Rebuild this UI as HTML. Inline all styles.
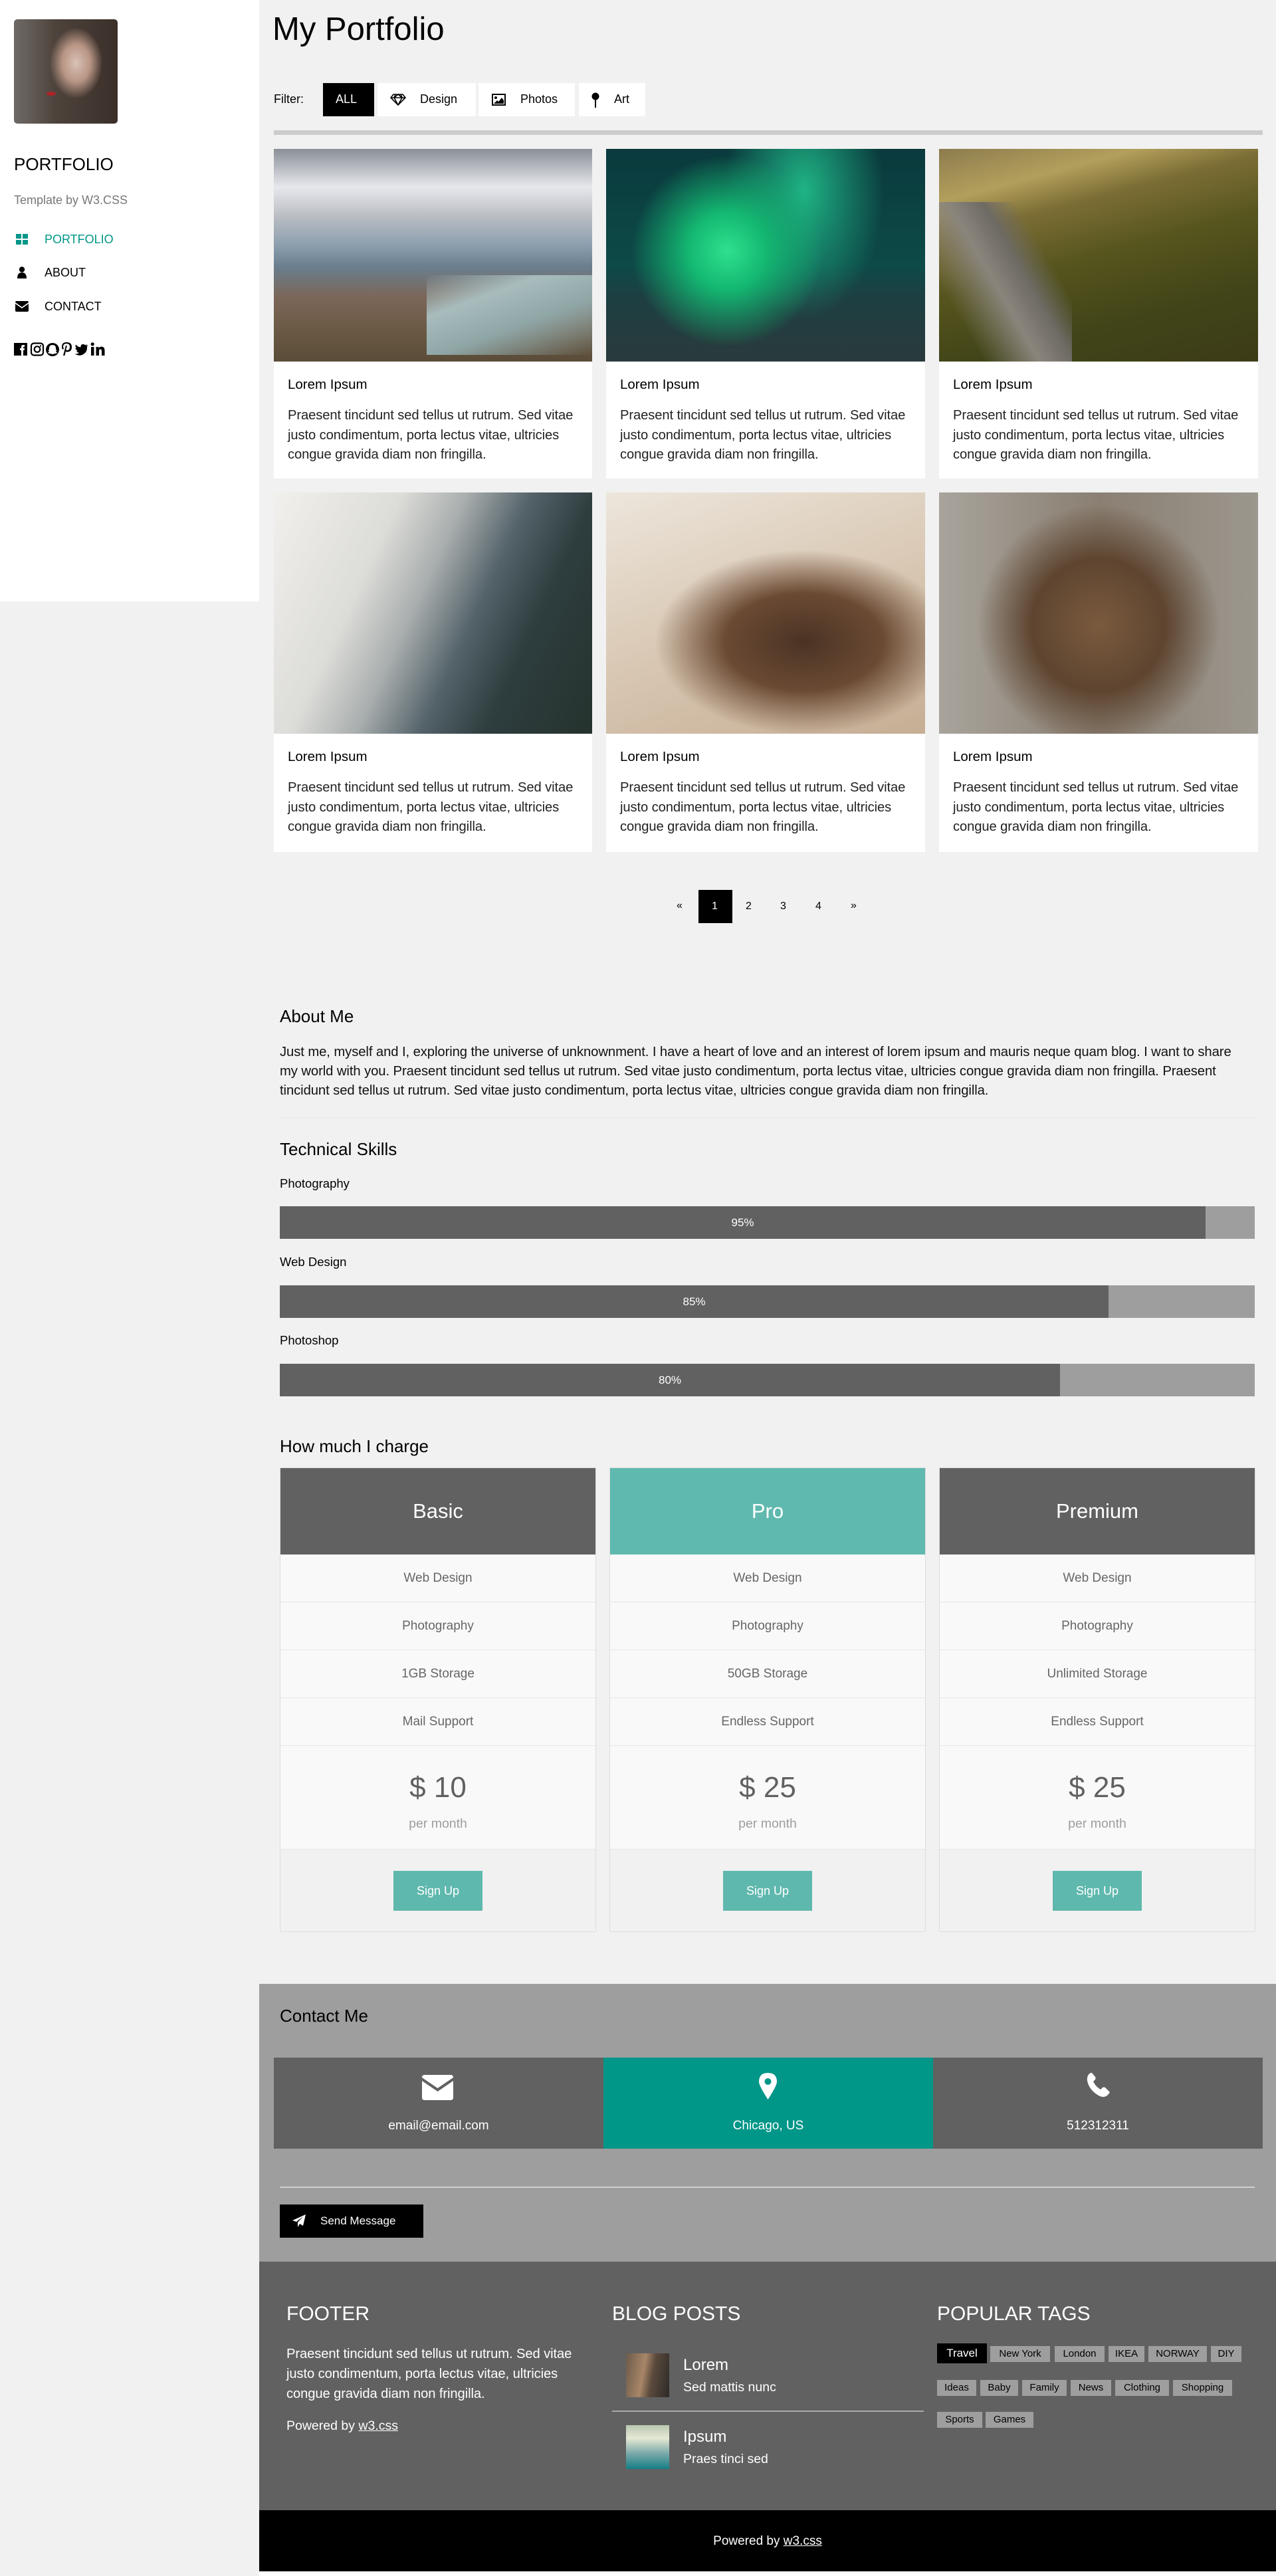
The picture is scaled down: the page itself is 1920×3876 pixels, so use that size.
<!DOCTYPE html>
<html><head><meta charset="utf-8">
<style>
*{margin:0;padding:0;box-sizing:border-box}
html,body{width:1920px;height:3876px;background:#f1f1f1;font-family:"Liberation Sans",sans-serif;color:#000;overflow:hidden}
.a{position:absolute;white-space:nowrap}
.img{position:absolute}
.card{position:absolute;background:#fff;width:480px}
.card .t{position:absolute;left:21px;font-size:20.5px}
.card .p{position:absolute;left:21px;font-size:20.2px;line-height:29.5px;color:#222;letter-spacing:-0.1px}
.bar{position:absolute;left:421px;width:1467px;height:49px;background:#9e9e9e}
.bar div{height:49px;background:#616161;color:#fff;font-size:17px;line-height:49px;text-align:center}
.pc{position:absolute;top:2208px;width:476px;height:698px;border:1px solid #ddd;background:#f9f9f9}
.pc .h{height:130px;color:#fff;font-size:31px;text-align:center;line-height:130px}
.pc .r{height:72px;border-bottom:1px solid #e6e6e6;text-align:center;line-height:72px;font-size:19px;color:#666}
.pc .pr{height:156px;border-bottom:1px solid #e6e6e6;text-align:center}
.pc .b{height:124px;background:#f1f1f1;position:relative;border-bottom:1px solid #ddd}
.pc .b span{position:absolute;left:50%;margin-left:-67px;top:32px;width:134px;height:60px;background:#5fb8ad;color:#fff;font-size:18px;line-height:60px;text-align:center}
.tag{position:absolute;height:24px;background:#9e9e9e;color:#000;font-size:15px;line-height:24px;text-align:center}
</style></head><body>

<!-- sidebar -->
<div class="img" style="left:0;top:0;width:390px;height:905px;background:#fff"></div>
<div class="img" style="left:21px;top:29px;width:156px;height:157px;border-radius:5px;background:radial-gradient(ellipse 30% 40% at 60% 42%,#d9c2b5 0%,#b89584 45%,rgba(90,70,60,0) 85%),linear-gradient(90deg,#6f6a66,#4e433c 40%,#3b2f29 100%)"></div>
<div class="img" style="left:70px;top:138px;width:14px;height:6px;border-radius:50%;background:#b0232a"></div>
<div class="a" style="left:21px;top:232px;font-size:26px">PORTFOLIO</div>
<div class="a" style="left:21px;top:291px;font-size:18px;color:#777">Template by W3.CSS</div>
<svg class="img" style="left:24px;top:352px" width="19" height="16" viewBox="0 0 19 16"><g fill="#009688"><rect x="0" y="0" width="8" height="7"/><rect x="10" y="0" width="8" height="7"/><rect x="0" y="9" width="8" height="7"/><rect x="10" y="9" width="8" height="7"/></g></svg>
<div class="a" style="left:67px;top:350px;font-size:18px;color:#009688">PORTFOLIO</div>
<svg class="img" style="left:26px;top:401px" width="14" height="18" viewBox="0 0 14 18"><circle cx="7" cy="4.5" r="4.2" fill="#000"/><path d="M0 18 Q0 9 7 9 Q14 9 14 18Z" fill="#000"/></svg>
<div class="a" style="left:67px;top:400px;font-size:18px">ABOUT</div>
<svg class="img" style="left:23px;top:453px" width="20" height="16" viewBox="0 0 20 16"><path d="M0 2 Q0 0 2 0 H18 Q20 0 20 2 L10 9 Z" fill="#000"/><path d="M0 4 L10 11 L20 4 V14 Q20 16 18 16 H2 Q0 16 0 14Z" fill="#000"/></svg>
<div class="a" style="left:67px;top:451px;font-size:18px">CONTACT</div>
<svg class="img" style="left:21px;top:514px" width="150" height="22" viewBox="0 0 150 22">
<rect x="0" y="2" width="20" height="19" fill="#000"/><path d="M11 21V13H9V10H11V8Q11 5 14 5H16V8H14.5Q14 8 14 9V10H16L15.6 13H14V21Z" fill="#fff"/>
<rect x="26" y="2.5" width="18" height="18" rx="4" fill="none" stroke="#000" stroke-width="2.2"/><circle cx="35" cy="11.5" r="4.3" fill="none" stroke="#000" stroke-width="2.2"/><circle cx="40" cy="6.5" r="1.2" fill="#000"/>
<circle cx="58" cy="12" r="10" fill="#000"/><path d="M58 5Q53 5 53 10V12L51 13L53 14Q52 17 50 17Q54 18 58 19Q62 18 66 17Q64 17 63 14L65 13L63 12V10Q63 5 58 5Z" fill="#fff"/>
<path d="M79 1Q72 1 72 8Q72 11 74 12L75 10Q74 9 74 8Q74 3 79 3Q84 3 84 8Q84 13 80 13Q78 13 78.5 11L80 6H78L74 21H76.5L77.8 15Q79 15.5 80 15.5Q87 15.5 87 8Q87 1 79 1Z" fill="#000"/>
<path d="M111 5Q110 6 108 6.5Q109.5 5.5 110 4Q108.5 5 107 5.2Q105.5 3.5 103 4Q100 5 100.5 8.5Q96 8 93 4.5Q91.5 8 94.5 10Q93.5 10 92.5 9.5Q92.5 12.5 96 13.5Q95 14 94 13.8Q95 16.5 98 16.8Q95.5 19 91.5 18.5Q101 24 108 16Q110.5 12 110 7.5Q111 6.5 111 5Z" fill="#000"/>
<rect x="116" y="8" width="4.5" height="13" fill="#000"/><circle cx="118.2" cy="3.8" r="2.6" fill="#000"/><path d="M123.5 8H127.5V10Q129 7.5 132 7.6Q136.5 7.8 136.5 13V21H132V14Q132 11.5 130 11.5Q128 11.5 128 14V21H123.5Z" fill="#000"/>
</svg>

<!-- header -->
<div class="a" style="left:410px;top:16px;font-size:49px">My Portfolio</div>
<div class="a" style="left:412px;top:139px;font-size:18px">Filter:</div>
<div class="img" style="left:486px;top:125px;width:77px;height:50px;background:#000"></div>
<div class="a" style="left:505px;top:139px;font-size:18px;color:#fff">ALL</div>
<div class="img" style="left:568px;top:125px;width:148px;height:50px;background:#fff"></div>
<svg class="img" style="left:587px;top:141px" width="24" height="18" viewBox="0 0 24 18"><path d="M5 1H19L23 6L12 17L1 6Z M1 6H23 M8 1L6 6L12 17L18 6L16 1 M6 6L12 1L18 6" fill="none" stroke="#000" stroke-width="1.6"/></svg>
<div class="a" style="left:632px;top:139px;font-size:18px">Design</div>
<div class="img" style="left:720px;top:125px;width:145px;height:50px;background:#fff"></div>
<svg class="img" style="left:740px;top:141px" width="21" height="18" viewBox="0 0 21 18"><rect x="1" y="1" width="19" height="16" fill="none" stroke="#000" stroke-width="2"/><circle cx="6" cy="6" r="2" fill="#000"/><path d="M3 15L8 10L10 12L15 6L18 10V15Z" fill="#000"/></svg>
<div class="a" style="left:783px;top:139px;font-size:18px">Photos</div>
<div class="img" style="left:871px;top:125px;width:100px;height:50px;background:#fff"></div>
<svg class="img" style="left:890px;top:139px" width="12" height="23" viewBox="0 0 12 23"><circle cx="6" cy="6" r="5.5" fill="#000"/><rect x="5" y="10" width="2" height="13" fill="#000"/></svg>
<div class="a" style="left:924px;top:139px;font-size:18px">Art</div>
<div class="img" style="left:412px;top:196px;width:1488px;height:7px;background:#ccc"></div>

<!-- cards row 1 -->
<div class="card" style="left:412px;top:224px;width:479px;height:496px">
 <div class="img" style="left:0;top:0;width:479px;height:320px;background:linear-gradient(180deg,#8a8f98 0%,#e6e8ec 18%,#b9bcc2 32%,#8ea0b0 45%,#6a7f8f 55%,#7b6658 70%,#6b5a45 85%,#5a4c38 100%)"></div>
 <div class="img" style="left:230px;top:190px;width:249px;height:120px;background:linear-gradient(160deg,rgba(168,190,192,0) 0%,#a8bcbd 30%,#8fa6a6 60%,rgba(100,80,60,0) 100%)"></div>
 <div class="t" style="top:343px">Lorem Ipsum</div>
 <div class="p" style="top:387px">Praesent tincidunt sed tellus ut rutrum. Sed vitae<br>justo condimentum, porta lectus vitae, ultricies<br>congue gravida diam non fringilla.</div>
</div>
<div class="card" style="left:912px;top:224px;width:480px;height:496px">
 <div class="img" style="left:0;top:0;width:480px;height:320px;background:radial-gradient(ellipse 30% 45% at 38% 48%,#2fe08e 0%,#14b872 40%,rgba(10,80,70,0) 100%),radial-gradient(ellipse 25% 60% at 62% 20%,#1fb485 0%,rgba(10,80,70,0) 100%),linear-gradient(180deg,#0a3a3d 0%,#0d4a48 55%,#1d3f42 70%,#2a3a3c 100%)"></div>
 <div class="t" style="top:343px">Lorem Ipsum</div>
 <div class="p" style="top:387px">Praesent tincidunt sed tellus ut rutrum. Sed vitae<br>justo condimentum, porta lectus vitae, ultricies<br>congue gravida diam non fringilla.</div>
</div>
<div class="card" style="left:1413px;top:224px;width:480px;height:496px">
 <div class="img" style="left:0;top:0;width:480px;height:320px;background:linear-gradient(165deg,#8c7c4e 0%,#b39f5c 18%,#7c6e35 30%,#56551e 50%,#414418 75%,#3c3c17 100%)"></div>
 <div class="img" style="left:0;top:80px;width:200px;height:240px;background:linear-gradient(60deg,rgba(0,0,0,0) 20%,#8a857c 45%,#6e6a64 60%,rgba(0,0,0,0) 75%)"></div>
 <div class="t" style="top:343px">Lorem Ipsum</div>
 <div class="p" style="top:387px">Praesent tincidunt sed tellus ut rutrum. Sed vitae<br>justo condimentum, porta lectus vitae, ultricies<br>congue gravida diam non fringilla.</div>
</div>
<!-- cards row 2 -->
<div class="card" style="left:412px;top:741px;width:479px;height:541px">
 <div class="img" style="left:0;top:0;width:479px;height:363px;background:linear-gradient(115deg,#f2f0ec 0%,#dcdcd8 30%,#a9aeae 45%,#54636a 60%,#2e3d3e 75%,#25332e 100%)"></div>
 <div class="t" style="top:386px">Lorem Ipsum</div>
 <div class="p" style="top:430px">Praesent tincidunt sed tellus ut rutrum. Sed vitae<br>justo condimentum, porta lectus vitae, ultricies<br>congue gravida diam non fringilla.</div>
</div>
<div class="card" style="left:912px;top:741px;width:480px;height:541px">
 <div class="img" style="left:0;top:0;width:480px;height:363px;background:radial-gradient(ellipse 55% 45% at 62% 62%,#4a3324 0%,#6b4a33 45%,rgba(200,180,160,0) 85%),linear-gradient(160deg,#ede6dc 0%,#d9c8b4 50%,#c6ae94 100%)"></div>
 <div class="t" style="top:386px">Lorem Ipsum</div>
 <div class="p" style="top:430px">Praesent tincidunt sed tellus ut rutrum. Sed vitae<br>justo condimentum, porta lectus vitae, ultricies<br>congue gravida diam non fringilla.</div>
</div>
<div class="card" style="left:1413px;top:741px;width:480px;height:541px">
 <div class="img" style="left:0;top:0;width:480px;height:363px;background:radial-gradient(ellipse 38% 50% at 50% 55%,#7a5a3e 0%,#5e4530 55%,rgba(120,110,100,0) 100%),linear-gradient(90deg,#a8a49c,#8a7f72 50%,#9c978e)"></div>
 <div class="t" style="top:386px">Lorem Ipsum</div>
 <div class="p" style="top:430px">Praesent tincidunt sed tellus ut rutrum. Sed vitae<br>justo condimentum, porta lectus vitae, ultricies<br>congue gravida diam non fringilla.</div>
</div>

<!-- pagination -->
<div class="a" style="left:1018px;top:1354px;font-size:16px">«</div>
<div class="img" style="left:1051px;top:1339px;width:51px;height:50px;background:#000"></div>
<div class="a" style="left:1071px;top:1355px;font-size:16px;color:#fff">1</div>
<div class="a" style="left:1122px;top:1355px;font-size:16px">2</div>
<div class="a" style="left:1174px;top:1355px;font-size:16px">3</div>
<div class="a" style="left:1227px;top:1355px;font-size:16px">4</div>
<div class="a" style="left:1280px;top:1354px;font-size:16px">»</div>

<!-- about -->
<div class="a" style="left:421px;top:1514px;font-size:26px">About Me</div>
<div class="a" style="left:421px;top:1569px;font-size:20.3px;line-height:29px;color:#111;letter-spacing:-0.1px">Just me, myself and I, exploring the universe of unknownment. I have a heart of love and an interest of lorem ipsum and mauris neque quam blog. I want to share<br>my world with you. Praesent tincidunt sed tellus ut rutrum. Sed vitae justo condimentum, porta lectus vitae, ultricies congue gravida diam non fringilla. Praesent<br>tincidunt sed tellus ut rutrum. Sed vitae justo condimentum, porta lectus vitae, ultricies congue gravida diam non fringilla.</div>
<div class="img" style="left:421px;top:1681px;width:1467px;height:1px;background:#e8e8e8"></div>
<div class="a" style="left:421px;top:1714px;font-size:26px">Technical Skills</div>
<div class="a" style="left:421px;top:1770px;font-size:18.5px">Photography</div>
<div class="bar" style="top:1815px"><div style="width:1393px">95%</div></div>
<div class="a" style="left:421px;top:1888px;font-size:18.5px">Web Design</div>
<div class="bar" style="top:1934px"><div style="width:1247px">85%</div></div>
<div class="a" style="left:421px;top:2006px;font-size:18.5px">Photoshop</div>
<div class="bar" style="top:2052px"><div style="width:1174px">80%</div></div>

<!-- pricing -->
<div class="a" style="left:421px;top:2161px;font-size:26px">How much I charge</div>
<div class="pc" style="left:421px"><div class="h" style="background:#616161">Basic</div><div class="r">Web Design</div><div class="r">Photography</div><div class="r">1GB Storage</div><div class="r">Mail Support</div><div class="pr"><div style="padding-top:38px;font-size:44px;color:#616161">$ 10</div><div style="margin-top:18px;font-size:19.5px;color:#9e9e9e">per month</div></div><div class="b"><span>Sign Up</span></div></div>
<div class="pc" style="left:917px"><div class="h" style="background:#60b9af">Pro</div><div class="r">Web Design</div><div class="r">Photography</div><div class="r">50GB Storage</div><div class="r">Endless Support</div><div class="pr"><div style="padding-top:38px;font-size:44px;color:#616161">$ 25</div><div style="margin-top:18px;font-size:19.5px;color:#9e9e9e">per month</div></div><div class="b"><span>Sign Up</span></div></div>
<div class="pc" style="left:1413px"><div class="h" style="background:#616161">Premium</div><div class="r">Web Design</div><div class="r">Photography</div><div class="r">Unlimited Storage</div><div class="r">Endless Support</div><div class="pr"><div style="padding-top:38px;font-size:44px;color:#616161">$ 25</div><div style="margin-top:18px;font-size:19.5px;color:#9e9e9e">per month</div></div><div class="b"><span>Sign Up</span></div></div>

<!-- contact -->
<div class="img" style="left:390px;top:2985px;width:1530px;height:418px;background:#9e9e9e"></div>
<div class="a" style="left:421px;top:3018px;font-size:26px">Contact Me</div>
<div class="img" style="left:412px;top:3096px;width:496px;height:137px;background:#616161"></div>
<div class="img" style="left:908px;top:3096px;width:496px;height:137px;background:#009688"></div>
<div class="img" style="left:1404px;top:3096px;width:496px;height:137px;background:#616161"></div>
<svg class="img" style="left:635px;top:3122px" width="47" height="38" viewBox="0 0 47 38"><path d="M0 4Q0 0 4 0H43Q47 0 47 4L23.5 20Z" fill="#fff"/><path d="M0 9L23.5 25L47 9V34Q47 38 43 38H4Q0 38 0 34Z" fill="#fff"/></svg>
<svg class="img" style="left:1142px;top:3119px" width="27" height="40" viewBox="0 0 27 40"><path d="M13.5 0Q27 0 27 13.5Q27 19 13.5 40Q0 19 0 13.5Q0 0 13.5 0ZM13.5 8A5 5 0 1 0 13.5 18A5 5 0 1 0 13.5 8Z" fill="#fff" fill-rule="evenodd"/></svg>
<svg class="img" style="left:1633px;top:3119px" width="38" height="37" viewBox="0 0 38 37"><path d="M8 0Q2 3 3 12Q6 26 20 34Q29 39 35 32L37 29L30 22Q28 21 26 22L23 25Q16 21 12 13L15 10Q16 8 15 6L10 0Z" fill="#fff"/></svg>
<div class="a" style="left:412px;width:496px;text-align:center;top:3188px;font-size:19px;color:#fff">email@email.com</div>
<div class="a" style="left:908px;width:496px;text-align:center;top:3188px;font-size:19px;color:#fff">Chicago, US</div>
<div class="a" style="left:1404px;width:496px;text-align:center;top:3188px;font-size:19px;color:#fff">512312311</div>
<div class="img" style="left:421px;top:3290px;width:1467px;height:2px;background:#d0d0d0"></div>
<div class="img" style="left:421px;top:3317px;width:216px;height:50px;background:#000"></div>
<svg class="img" style="left:440px;top:3332px" width="20" height="20" viewBox="0 0 20 20"><path d="M20 0L0 9L6 11L16 3L8 12V19L11 14L16 17Z" fill="#fff"/></svg>
<div class="a" style="left:482px;top:3332px;font-size:17px;color:#fff">Send Message</div>

<!-- footer -->
<div class="img" style="left:390px;top:3403px;width:1530px;height:374px;background:#616161"></div>
<div class="a" style="left:431px;top:3465px;font-size:30px;color:#fff">FOOTER</div>
<div class="a" style="left:431px;top:3527px;font-size:20.2px;line-height:30px;color:#fff;letter-spacing:-0.1px">Praesent tincidunt sed tellus ut rutrum. Sed vitae<br>justo condimentum, porta lectus vitae, ultricies<br>congue gravida diam non fringilla.</div>
<div class="a" style="left:431px;top:3639px;font-size:19.5px;color:#fff">Powered by <u>w3.css</u></div>
<div class="a" style="left:921px;top:3465px;font-size:30px;color:#fff">BLOG POSTS</div>
<div class="img" style="left:942px;top:3541px;width:65px;height:66px;background:linear-gradient(100deg,#6c5a4a,#a88668 40%,#5a4a3c 60%,#2d2a28)"></div>
<div class="a" style="left:1028px;top:3545px;font-size:24px;color:#fff">Lorem</div>
<div class="a" style="left:1028px;top:3581px;font-size:19.5px;color:#fff">Sed mattis nunc</div>
<div class="img" style="left:921px;top:3627px;width:469px;height:2px;background:#aaa"></div>
<div class="img" style="left:942px;top:3649px;width:65px;height:66px;background:linear-gradient(180deg,#b9c8b0,#e6e8d4 30%,#78a8a8 65%,#167e88)"></div>
<div class="a" style="left:1028px;top:3653px;font-size:24px;color:#fff">Ipsum</div>
<div class="a" style="left:1028px;top:3689px;font-size:19.5px;color:#fff">Praes tinci sed</div>
<div class="a" style="left:1410px;top:3465px;font-size:30px;color:#fff">POPULAR TAGS</div>
<div class="tag" style="left:1410px;top:3526px;width:75px;height:30px;line-height:30px;background:#000;color:#fff;font-size:17px">Travel</div>
<div class="tag" style="left:1490px;top:3530px;width:90px">New York</div>
<div class="tag" style="left:1587px;top:3530px;width:75px">London</div>
<div class="tag" style="left:1668px;top:3530px;width:54px">IKEA</div>
<div class="tag" style="left:1728px;top:3530px;width:88px">NORWAY</div>
<div class="tag" style="left:1822px;top:3530px;width:46px">DIY</div>
<div class="tag" style="left:1410px;top:3581px;width:59px">Ideas</div>
<div class="tag" style="left:1475px;top:3581px;width:57px">Baby</div>
<div class="tag" style="left:1538px;top:3581px;width:67px">Family</div>
<div class="tag" style="left:1611px;top:3581px;width:61px">News</div>
<div class="tag" style="left:1678px;top:3581px;width:81px">Clothing</div>
<div class="tag" style="left:1765px;top:3581px;width:89px">Shopping</div>
<div class="tag" style="left:1410px;top:3629px;width:68px">Sports</div>
<div class="tag" style="left:1483px;top:3629px;width:72px">Games</div>
<div class="img" style="left:390px;top:3777px;width:1530px;height:92px;background:#000"></div>
<div class="a" style="left:390px;width:1530px;text-align:center;top:3813px;font-size:19px;color:#fff">Powered by <u>w3.css</u></div>
<div class="img" style="left:390px;top:3869px;width:1530px;height:7px;background:#fff"></div>
</body></html>
